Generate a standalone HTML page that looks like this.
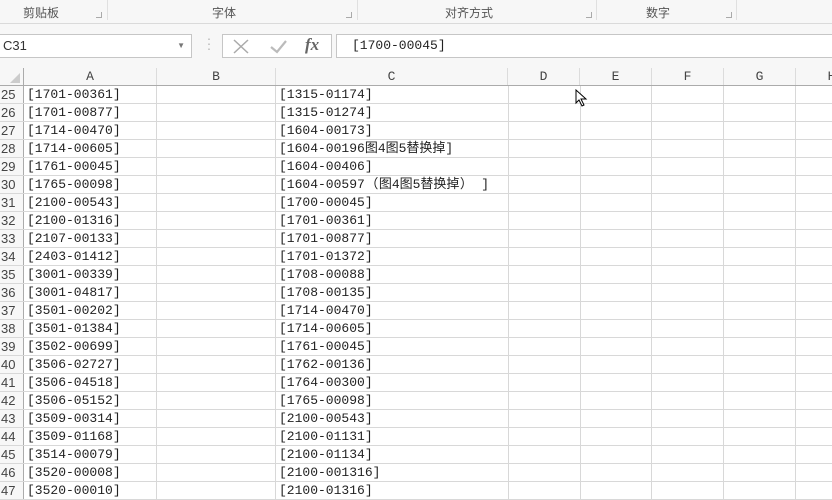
<!DOCTYPE html>
<html><head><meta charset="utf-8"><style>
*{margin:0;padding:0;box-sizing:border-box}
body{width:832px;height:487px;overflow:hidden;background:#fff;position:relative;font-family:"Liberation Mono","Noto Sans CJK SC",monospace;color:#222}
.rib{position:absolute;left:0;top:0;width:832px;height:24px;background:#f7f7f7;border-bottom:1px solid #dadada}
.rl{position:absolute;top:4px;font-family:"Liberation Sans","Noto Sans CJK SC",sans-serif;font-size:12px;color:#555}
.sep{position:absolute;top:0;width:1px;height:20px;background:#e0e0e0}
.dl{position:absolute;top:12px;width:6px;height:6px;border:1px solid #aaa;border-top:none;border-left:none}
.fb{position:absolute;left:0;top:24px;width:832px;height:44px;background:#f7f7f7}
.box{position:absolute;background:#fff;border:1px solid #c6c6c6}
.hdr{position:absolute;left:0;top:68px;width:832px;height:18px;background:#f7f7f7;border-bottom:1px solid #ababab}
.ch{position:absolute;top:0;height:17px;text-align:center;font-size:13px;line-height:18px;color:#444;border-right:1px solid #dcdcdc}
.row{position:absolute;left:0;width:832px;height:18px;border-bottom:1px solid #d8d8d8;font-size:13px;line-height:18px}
.row div{position:absolute;top:0;height:17px;border-right:1px solid #d8d8d8;white-space:nowrap}
.n{left:0;width:24px;color:#444;font-family:"Liberation Sans",sans-serif;font-size:13px;padding-left:1px;background:#f7f7f7;border-right:1px solid #ababab!important}
.p{display:inline-block;width:14px;text-align:center}
</style></head><body>
<div class="rib">
<span class="rl" style="left:23px">剪贴板</span><div class="dl" style="left:96px"></div><div class="sep" style="left:107px"></div>
<span class="rl" style="left:212px">字体</span><div class="dl" style="left:346px"></div><div class="sep" style="left:357px"></div>
<span class="rl" style="left:445px">对齐方式</span><div class="dl" style="left:586px"></div><div class="sep" style="left:596px"></div>
<span class="rl" style="left:646px">数字</span><div class="dl" style="left:726px"></div><div class="sep" style="left:736px"></div>
</div>
<div class="fb">
<div class="box" style="left:-1px;top:10px;width:193px;height:24px;font-size:13px;line-height:22px;padding-left:3px;color:#333;font-family:'Liberation Sans',sans-serif">C31<span style="position:absolute;right:6px;top:0;font-size:8px;color:#777">▼</span></div>
<div style="position:absolute;left:206px;top:14px;color:#aaa;font-size:10px;line-height:5px">·<br>·<br>·</div>
<div class="box" style="left:222px;top:10px;width:110px;height:24px">
<svg width="108" height="22" style="position:absolute;left:0;top:0"><path d="M11 5L25 18M25 5L11 18" stroke="#aaa" stroke-width="1.5" fill="none"/><path d="M48 12L54 17L63 6" stroke="#bbb" stroke-width="2.2" fill="none"/></svg>
<span style="position:absolute;left:82px;top:0;font-family:'Liberation Serif',serif;font-style:italic;font-weight:bold;font-size:17px;color:#666">fx</span></div>
<div class="box" style="left:336px;top:10px;width:500px;height:24px;font-size:13px;line-height:22px;padding-left:15px">[1700-00045]</div>
</div>
<div class="hdr">
<div class="ch" style="left:0;width:24px;border-right:1px solid #ababab"><svg width="10" height="10" style="position:absolute;left:10px;top:5px"><path d="M10 0L10 10L0 10Z" fill="#ccc"/></svg></div>
<div class="ch" style="left:24px;width:133px">A</div>
<div class="ch" style="left:157px;width:119px">B</div>
<div class="ch" style="left:276px;width:232px">C</div>
<div class="ch" style="left:508px;width:72px">D</div>
<div class="ch" style="left:580px;width:72px">E</div>
<div class="ch" style="left:652px;width:72px">F</div>
<div class="ch" style="left:724px;width:72px">G</div>
<div class="ch" style="left:796px;width:72px">H</div>
</div>
<div id="g"></div>
<script>
var a=["[1701-00361]","[1701-00877]","[1714-00470]","[1714-00605]","[1761-00045]","[1765-00098]","[2100-00543]","[2100-01316]","[2107-00133]","[2403-01412]","[3001-00339]","[3001-04817]","[3501-00202]","[3501-01384]","[3502-00699]","[3506-02727]","[3506-04518]","[3506-05152]","[3509-00314]","[3509-01168]","[3514-00079]","[3520-00008]","[3520-00010]"];
var c=["[1315-01174]","[1315-01274]","[1604-00173]","[1604-00196图4图5替换掉]","[1604-00406]","[1604-00597<span class=p>（</span>图4图5替换掉<span class=p>）</span>&nbsp;]","[1700-00045]","[1701-00361]","[1701-00877]","[1701-01372]","[1708-00088]","[1708-00135]","[1714-00470]","[1714-00605]","[1761-00045]","[1762-00136]","[1764-00300]","[1765-00098]","[2100-00543]","[2100-01131]","[2100-01134]","[2100-001316]","[2100-01316]"];
var h="";
for(var i=0;i<23;i++){h+='<div class="row" style="top:'+(86+18*i)+'px"><div class="n">'+(25+i)+'</div><div style="left:24px;width:133px;padding-left:3px">'+a[i]+'</div><div style="left:157px;width:119px"></div><div style="left:276px;width:232px;padding-left:3px;overflow:visible;border-right:none"><span>'+c[i]+'</span></div><div style="left:508px;width:0;border-left:1px solid #d8d8d8;border-right:none"></div><div style="left:580px;width:72px;border-left:1px solid #d8d8d8"></div><div style="left:652px;width:72px"></div><div style="left:724px;width:72px"></div><div style="left:796px;width:72px"></div></div>';}
document.getElementById("g").innerHTML=h;
</script>
<svg width="14" height="20" style="position:absolute;left:575px;top:89px"><path d="M1 1L1 14L4 11L7 17L9 16L6 10L11 10Z" fill="#fff" stroke="#000" stroke-width="1"/></svg>
</body></html>
